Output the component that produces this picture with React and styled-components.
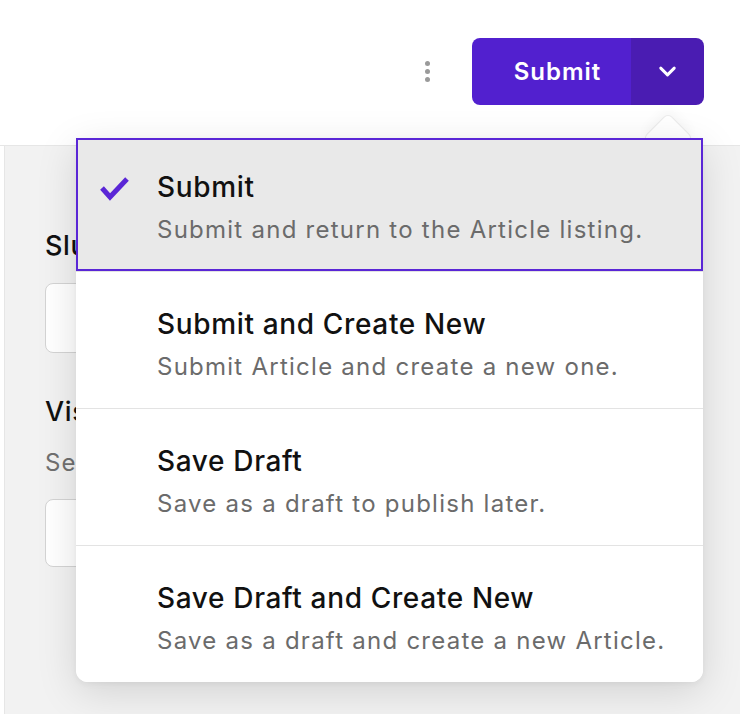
import styled, { createGlobalStyle } from 'styled-components'
import { ChevronDown } from 'lucide-react'

const Global = createGlobalStyle`
  html, body { margin: 0; padding: 0; background: #fff; }
  body { font-family: Inter, "Noto Sans", sans-serif; -webkit-font-smoothing: antialiased; }
`

const Page = styled.div`
  width: 740px;
  height: 714px;
  overflow: hidden;
  position: relative;
  display: flex;
  flex-direction: column;
`

const Header = styled.header`
  height: 146px;
  flex-shrink: 0;
  box-sizing: border-box;
  background: #fff;
  border-bottom: 1px solid #e6e6e6;
  display: flex;
  justify-content: flex-end;
  align-items: flex-start;
  gap: 33px;
  padding: 38px 36px 0 0;
  position: relative;
  z-index: 2;
`

const Kebab = styled.button`
  width: 24px;
  height: 67px;
  border: 0;
  background: none;
  padding: 0;
  display: flex;
  flex-direction: column;
  align-items: center;
  justify-content: center;
  gap: 3px;
  span {
    width: 5px;
    height: 5px;
    border-radius: 50%;
    background: #9a9a9a;
  }
`

const SplitWrap = styled.div`
  position: relative;
`

const Split = styled.div`
  display: flex;
  height: 67px;
  border-radius: 8px;
  overflow: hidden;
`

const MainBtn = styled.button`
  width: 159px;
  border: 0;
  padding: 0 0 0 12px;
  background: #5220cf;
  color: #fff;
  font-family: Inter, sans-serif;
  font-size: 24px;
  font-weight: 600;
  letter-spacing: 1px;
`

const ToggleBtn = styled.button`
  width: 73px;
  border: 0;
  background: #4a1cb2;
  color: #fff;
  display: flex;
  align-items: center;
  justify-content: center;
  padding: 0;
`

const Caret = styled.div`
  position: absolute;
  top: 83px;
  right: 19px;
  width: 34px;
  height: 34px;
  background: #fff;
  transform: rotate(45deg);
  border-radius: 5px;
  box-shadow: 0 0 0 1px #ebebeb, -4px -4px 12px rgba(0, 0, 0, 0.04);
  z-index: 3;
`

const Menu = styled.ul`
  position: absolute;
  top: 100px;
  right: 1px;
  width: 627px;
  margin: 0;
  padding: 0;
  list-style: none;
  background: #fff;
  border-radius: 2px 2px 12px 12px;
  box-shadow: 0 10px 40px rgba(0, 0, 0, 0.13), 0 2px 6px rgba(0, 0, 0, 0.05);
  z-index: 4;
`

const Item = styled.li`
  display: grid;
  grid-template-columns: 57px 1fr;
  align-items: start;
  box-sizing: border-box;
  height: ${p => (p.$first ? 133 : 137)}px;
  padding: ${p => (p.$first ? 33 : 36)}px 10px 0 24px;
  border-top: ${p => (p.$first ? 'none' : '1px solid #e3e3e3')};
  background: ${p => (p.$active ? '#e9e9e9' : '#fff')};
  outline: ${p => (p.$active ? '2px solid #5a26d6' : 'none')};
  outline-offset: -2px;
  &:last-child { border-radius: 0 0 12px 12px; }
`

const CheckCell = styled.div`
  padding-top: 5px;
  color: #5a26d6;
`

const Title = styled.div`
  font-size: 28px;
  line-height: 32px;
  font-weight: 500;
  color: #111;
  letter-spacing: 0.65px;
  white-space: nowrap;
`

const Desc = styled.div`
  margin-top: 12px;
  font-size: 24px;
  line-height: 30px;
  color: #6b6b6b;
  letter-spacing: 1.25px;
  white-space: nowrap;
`

const Body = styled.main`
  flex: 1;
  margin-left: 4px;
  border-left: 1px solid #e6e6e6;
  background: #f2f2f2;
  padding: 85px 0 0 40px;
`

const Label = styled.div`
  font-size: 27px;
  line-height: 30px;
  font-weight: 500;
  color: #111;
  letter-spacing: 0.6px;
  margin-top: ${p => p.$top || 0}px;
`

const Hint = styled.div`
  margin-top: 22px;
  font-size: 24px;
  line-height: 28px;
  color: #707070;
  letter-spacing: 1.2px;
`

const Field = styled.div`
  margin-top: ${p => p.$top}px;
  width: 300px;
  height: ${p => p.$h}px;
  box-sizing: border-box;
  border: 1px solid #d4d4d4;
  border-radius: 8px;
  background: #fff;
`

const Check = () => (
  <svg width="30" height="26" viewBox="0 0 30 26">
    <polyline points="2,12 10,21 27,3" fill="none" stroke="currentColor" strokeWidth="5" />
  </svg>
)

const options = [
  { title: 'Submit', desc: 'Submit and return to the Article listing.' },
  { title: 'Submit and Create New', desc: 'Submit Article and create a new one.' },
  { title: 'Save Draft', desc: 'Save as a draft to publish later.' },
  { title: 'Save Draft and Create New', desc: 'Save as a draft and create a new Article.' },
]

export default function App() {
  return (
    <Page>
      <Global />
      <Header>
        <Kebab aria-label="More">
          <span /><span /><span />
        </Kebab>
        <SplitWrap>
          <Split>
            <MainBtn>Submit</MainBtn>
            <ToggleBtn aria-label="Options">
              <ChevronDown size={27} strokeWidth={2.6} />
            </ToggleBtn>
          </Split>
          <Caret />
          <Menu>
            {options.map((o, i) => (
              <Item key={o.title} $first={i === 0} $active={i === 0}>
                <CheckCell>{i === 0 && <Check />}</CheckCell>
                <div>
                  <Title>{o.title}</Title>
                  <Desc>{o.desc}</Desc>
                </div>
              </Item>
            ))}
          </Menu>
        </SplitWrap>
      </Header>
      <Body>
        <Label>Slug</Label>
        <Field $top={22} $h={70} />
        <Label $top={44}>Visibility</Label>
        <Hint>Select who can see this</Hint>
        <Field $top={22} $h={68} />
      </Body>
    </Page>
  )
}
